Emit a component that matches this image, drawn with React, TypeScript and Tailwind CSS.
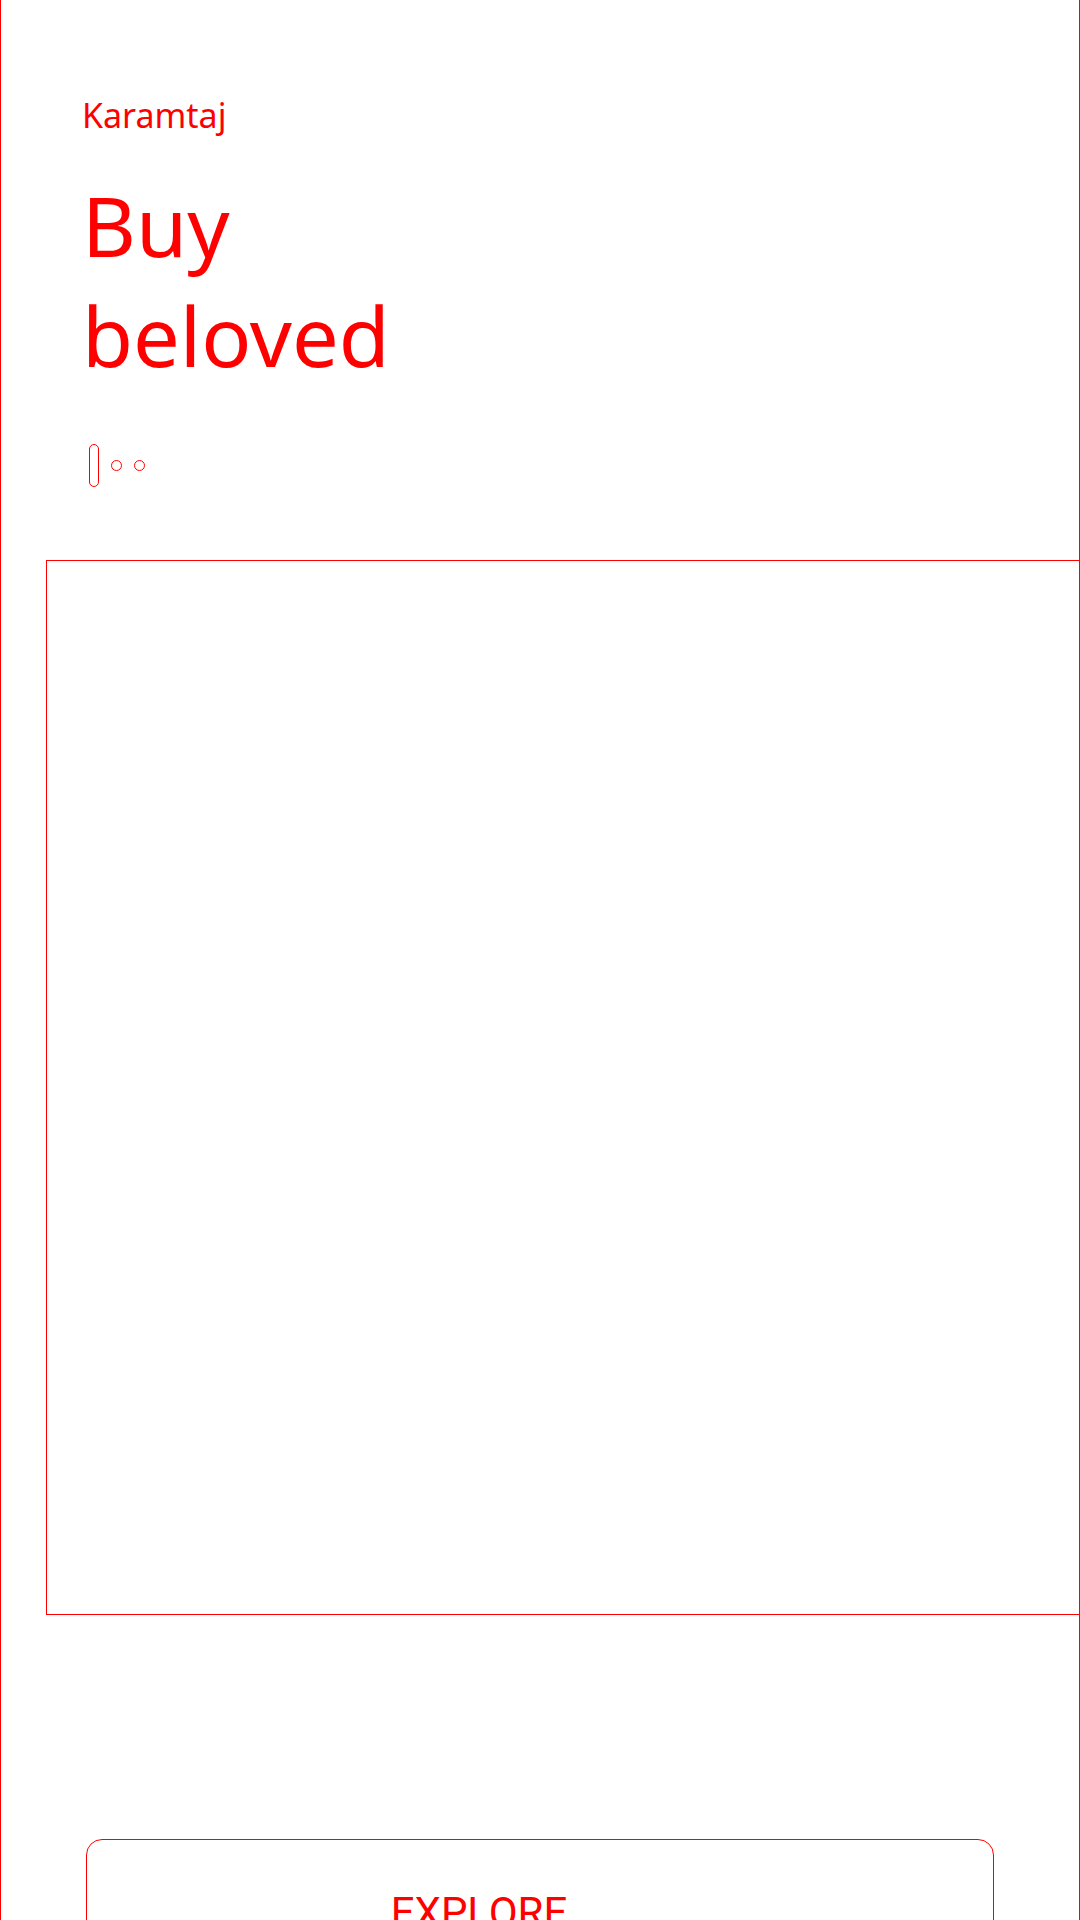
export default function App() {
  return (
    <div className="h-screen overflow-hidden bg-white">
      <main className="flex flex-col border-x border-x-[#ff0000] pt-[95px] text-[#ff0000]">
        <header className="pl-[81px] font-['Noto_Sans',sans-serif]">
          <p className="text-[34px] leading-10">Karamtaj</p>
          <h1 className="mt-[35px] text-[83px] leading-[110px]">
            Buy
            <br />
            beloved
          </h1>
        </header>
        <nav aria-label="Slides" className="mt-[54px] flex items-center gap-3 pl-[88px]">
          <button aria-label="Slide 1" className="h-[43px] w-[10px] rounded-full border border-[#ff0000]" />
          <button aria-label="Slide 2" className="size-[11px] rounded-full border border-[#ff0000]" />
          <button aria-label="Slide 3" className="size-[11px] rounded-full border border-[#ff0000]" />
        </nav>
        <section
          aria-label="Featured"
          className="mt-[73px] ml-[45px] h-[1055px] border-y border-l border-[#ff0000]"
        />
        <button className="mx-[85px] mt-[224px] h-[146px] rounded-2xl border border-[#ff0000] pr-[122px] font-['Roboto',sans-serif] text-[42px]">
          EXPLORE
        </button>
      </main>
    </div>
  );
}
